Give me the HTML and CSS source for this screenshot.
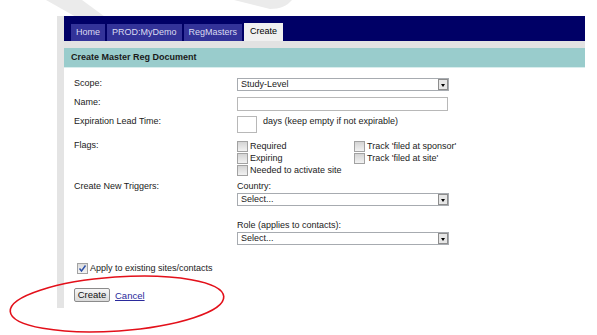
FILE: index.html
```html
<!DOCTYPE html>
<html lang="en">
<head>
    <meta charset="UTF-8">
    <title>Create Master Reg Document</title>
    <link rel="stylesheet" href="styles.css">
</head>
<body>

    <!-- faint watermark behind the page -->
    <svg class="watermark" width="597" height="30" viewBox="0 0 597 30">
        <path d="M46 0 L82 0 L112 22 L92 26 Z" fill="#ebebeb"/>
        <path d="M234 0 L292 0 C287 6 280 9 270 9 Z" fill="#ebebeb"/>
    </svg>

    <div class="page">
        <div class="tabbar">
            <a class="tab">Home</a>
            <a class="tab">PROD:MyDemo</a>
            <a class="tab">RegMasters</a>
            <a class="tab active">Create</a>
        </div>
        <div class="substrip"></div>
        <div class="titlebar">Create Master Reg Document</div>

        <div class="form">
            <div class="row row-scope">
                <div class="label">Scope:</div>
                <div class="field">
                    <div class="select"><span class="value">Study-Level</span><span class="arrow"></span></div>
                </div>
            </div>

            <div class="row row-name">
                <div class="label">Name:</div>
                <div class="field"><div class="textbox wide"></div></div>
            </div>

            <div class="row row-expire">
                <div class="label">Expiration Lead Time:</div>
                <div class="field inline">
                    <div class="textbox small"></div>
                    <span class="hint">days (keep empty if not expirable)</span>
                </div>
            </div>

            <div class="row row-flags">
                <div class="label">Flags:</div>
                <div class="field flags">
                    <label class="check"><span class="box"></span>Required</label>
                    <label class="check"><span class="box"></span>Track 'filed at sponsor'</label>
                    <label class="check"><span class="box"></span>Expiring</label>
                    <label class="check"><span class="box"></span>Track 'filed at site'</label>
                    <label class="check"><span class="box"></span>Needed to activate site</label>
                </div>
            </div>

            <div class="row row-triggers">
                <div class="label">Create New Triggers:</div>
                <div class="field">
                    <div class="sublabel">Country:</div>
                    <div class="select"><span class="value">Select...</span><span class="arrow"></span></div>
                    <div class="sublabel role">Role (applies to contacts):</div>
                    <div class="select"><span class="value">Select...</span><span class="arrow"></span></div>
                </div>
            </div>

            <label class="check apply">
                <span class="box checked">
                    <svg width="9" height="9" viewBox="0 0 9 9"><path d="M1.5 4.5 L3.5 7 L7.5 1.5" fill="none" stroke="#2b4fa8" stroke-width="1.4"/></svg>
                </span>Apply to existing sites/contacts
            </label>

            <div class="actions">
                <button class="btn">Create</button>
                <a class="link" href="#">Cancel</a>
            </div>
        </div>
    </div>

    <!-- red marker drawn over the screenshot -->
    <svg class="marker" width="597" height="335" viewBox="0 0 597 335">
        <ellipse cx="117" cy="304" rx="107" ry="27" transform="rotate(-4 117 304)" fill="none" stroke="#e3101a" stroke-width="1.6"/>
    </svg>

</body>
</html>
```

FILE: styles.css
```css
body {
    margin: 0;
    background-color: #fff;
    font-family: "Liberation Sans", Arial, sans-serif;
    font-size: 9px;
    line-height: 11px;
    color: #222;
    position: relative;
    height: 335px;
    overflow: hidden;
}

.watermark {
    position: absolute;
    top: 0;
    left: 0;
}

.marker {
    position: absolute;
    top: 0;
    left: 0;
    pointer-events: none;
}

.page {
    position: relative;
    margin: 16px 0 0 57px;
    width: 521px;
    height: 292px;
    border-left: 7px solid #e4e4e4;
    background-color: #fff;
}

/* tabs */
.tabbar {
    display: flex;
    align-items: flex-end;
    gap: 2px;
    height: 25px;
    padding-left: 7px;
    box-sizing: border-box;
    background-color: #000066;
}

.tab {
    height: 17px;
    line-height: 17px;
    padding: 0 5px;
    background-color: #333399;
    color: #dcdcf0;
    cursor: pointer;
}

.tab.active {
    height: 18px;
    padding: 0 6px;
    background-color: #f0f0f0;
    color: #000;
}

.substrip {
    height: 7px;
    background-color: #e2e2e2;
}

.titlebar {
    height: 19px;
    line-height: 19px;
    padding-left: 7px;
    background-color: #99cccc;
    border-bottom: 1px solid #d8eded;
    font-weight: bold;
    color: #1a1a1a;
}

/* form */
.form {
    padding: 10px 0 0 10px;
}

.row {
    display: grid;
    grid-template-columns: 163px 1fr;
    align-items: start;
}

.row-scope { margin-bottom: 6px; }
.row-name { margin-bottom: 5px; }
.row-expire { margin-bottom: 7px; }
.row-flags { margin-bottom: 5px; }
.row-triggers { margin-bottom: 17px; }

.label {
    color: #222;
}

.select {
    display: flex;
    width: 212px;
    height: 13px;
    box-sizing: border-box;
    border: 1px solid #a7abb0;
    background-color: #fff;
}

.select .value {
    flex: 1;
    padding-left: 3px;
    line-height: 11px;
}

.select .arrow {
    position: relative;
    width: 10px;
    border: 1px solid #8d8d8d;
    box-sizing: border-box;
    background-color: #e6e6e6;
}

.select .arrow::after {
    content: "";
    position: absolute;
    left: 2px;
    top: 4px;
    border-left: 2px solid transparent;
    border-right: 2px solid transparent;
    border-top: 3px solid #000;
}

.textbox {
    border: 1px solid #b8b8b8;
    box-sizing: border-box;
    background-color: #fff;
}

.textbox.wide {
    width: 211px;
    height: 14px;
}

.textbox.small {
    width: 20px;
    height: 17px;
}

.field.inline {
    display: flex;
    align-items: flex-start;
    gap: 6px;
}

.hint {
    line-height: 10px;
}

.flags {
    display: grid;
    grid-template-columns: 117px auto;
    grid-auto-rows: 12px;
}

.check {
    display: flex;
    align-items: center;
    gap: 2px;
    white-space: nowrap;
}

.box {
    display: inline-flex;
    align-items: center;
    justify-content: center;
    width: 11px;
    height: 11px;
    box-sizing: border-box;
    border: 1px solid #a2a2a2;
    background: linear-gradient(#d4d4d4, #f2f2f2);
}

.box.checked {
    background: linear-gradient(#dcdcdc, #f4f4f4);
}

.sublabel {
    margin-bottom: 1px;
}

.sublabel.role {
    margin-top: 14px;
}

.apply {
    height: 12px;
    margin: 0 0 14px 3px;
}

.actions {
    display: flex;
    align-items: center;
    gap: 5px;
}

.btn {
    width: 36px;
    height: 14px;
    padding: 0;
    font-family: inherit;
    font-size: 9.5px;
    line-height: 12px;
    color: #111;
    border: 1px solid #8b8b8b;
    border-radius: 2px;
    background: linear-gradient(#f6f6f6, #dadada);
}

.link {
    color: #2a2a9c;
    text-decoration: underline;
    font-size: 9.5px;
}
```
